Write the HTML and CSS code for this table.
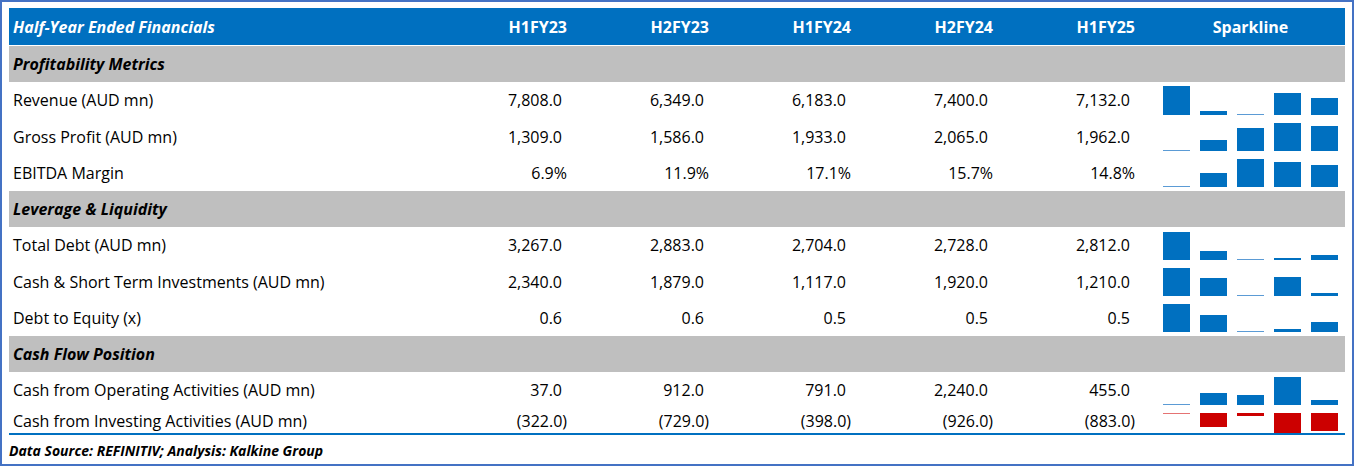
FILE: index.html
```html
<!DOCTYPE html>
<html lang="en">
<head>
<meta charset="utf-8">
<title>Half-Year Ended Financials</title>
<link rel="stylesheet" href="styles.css">
</head>
<body>
<div class="frame">
  <div class="table">
    <div class="row head">
      <div class="cell label">Half-Year Ended Financials</div>
      <div class="cell val">H1FY23</div>
      <div class="cell val">H2FY23</div>
      <div class="cell val">H1FY24</div>
      <div class="cell val">H2FY24</div>
      <div class="cell val">H1FY25</div>
      <div class="cell spark-head">Sparkline</div>
    </div>

    <div class="row section"><div class="cell label">Profitability Metrics</div></div>

    <div class="row">
      <div class="cell label">Revenue (AUD mn)</div>
      <div class="cell val"><span class="pad">7,808.0</span></div>
      <div class="cell val"><span class="pad">6,349.0</span></div>
      <div class="cell val"><span class="pad">6,183.0</span></div>
      <div class="cell val"><span class="pad">7,400.0</span></div>
      <div class="cell val"><span class="pad">7,132.0</span></div>
      <div class="cell spark up">
        <i class="bar" style="height:29px"></i><i class="bar" style="height:4px"></i><i class="bar thin"></i><i class="bar" style="height:22px"></i><i class="bar" style="height:17px"></i>
      </div>
    </div>
    <div class="row">
      <div class="cell label">Gross Profit (AUD mn)</div>
      <div class="cell val"><span class="pad">1,309.0</span></div>
      <div class="cell val"><span class="pad">1,586.0</span></div>
      <div class="cell val"><span class="pad">1,933.0</span></div>
      <div class="cell val"><span class="pad">2,065.0</span></div>
      <div class="cell val"><span class="pad">1,962.0</span></div>
      <div class="cell spark up">
        <i class="bar thin"></i><i class="bar" style="height:11px"></i><i class="bar" style="height:23px"></i><i class="bar" style="height:28px"></i><i class="bar" style="height:25px"></i>
      </div>
    </div>
    <div class="row">
      <div class="cell label">EBITDA Margin</div>
      <div class="cell val">6.9%</div>
      <div class="cell val">11.9%</div>
      <div class="cell val">17.1%</div>
      <div class="cell val">15.7%</div>
      <div class="cell val">14.8%</div>
      <div class="cell spark up">
        <i class="bar thin"></i><i class="bar" style="height:14px"></i><i class="bar" style="height:28px"></i><i class="bar" style="height:25px"></i><i class="bar" style="height:22px"></i>
      </div>
    </div>

    <div class="row section"><div class="cell label">Leverage &amp; Liquidity</div></div>

    <div class="row">
      <div class="cell label">Total Debt (AUD mn)</div>
      <div class="cell val"><span class="pad">3,267.0</span></div>
      <div class="cell val"><span class="pad">2,883.0</span></div>
      <div class="cell val"><span class="pad">2,704.0</span></div>
      <div class="cell val"><span class="pad">2,728.0</span></div>
      <div class="cell val"><span class="pad">2,812.0</span></div>
      <div class="cell spark up">
        <i class="bar" style="height:28px"></i><i class="bar" style="height:9px"></i><i class="bar thin"></i><i class="bar" style="height:2px"></i><i class="bar" style="height:5px"></i>
      </div>
    </div>
    <div class="row">
      <div class="cell label">Cash &amp; Short Term Investments (AUD mn)</div>
      <div class="cell val"><span class="pad">2,340.0</span></div>
      <div class="cell val"><span class="pad">1,879.0</span></div>
      <div class="cell val"><span class="pad">1,117.0</span></div>
      <div class="cell val"><span class="pad">1,920.0</span></div>
      <div class="cell val"><span class="pad">1,210.0</span></div>
      <div class="cell spark up">
        <i class="bar" style="height:28px"></i><i class="bar" style="height:18px"></i><i class="bar thin"></i><i class="bar" style="height:19px"></i><i class="bar" style="height:3px"></i>
      </div>
    </div>
    <div class="row">
      <div class="cell label">Debt to Equity (x)</div>
      <div class="cell val"><span class="pad">0.6</span></div>
      <div class="cell val"><span class="pad">0.6</span></div>
      <div class="cell val"><span class="pad">0.5</span></div>
      <div class="cell val"><span class="pad">0.5</span></div>
      <div class="cell val"><span class="pad">0.5</span></div>
      <div class="cell spark up">
        <i class="bar" style="height:28px"></i><i class="bar" style="height:17px"></i><i class="bar thin"></i><i class="bar" style="height:3px"></i><i class="bar" style="height:10px"></i>
      </div>
    </div>

    <div class="row section"><div class="cell label">Cash Flow Position</div></div>

    <div class="row">
      <div class="cell label">Cash from Operating Activities (AUD mn)</div>
      <div class="cell val"><span class="pad">37.0</span></div>
      <div class="cell val"><span class="pad">912.0</span></div>
      <div class="cell val"><span class="pad">791.0</span></div>
      <div class="cell val"><span class="pad">2,240.0</span></div>
      <div class="cell val"><span class="pad">455.0</span></div>
      <div class="cell spark up">
        <i class="bar thin"></i><i class="bar" style="height:12px"></i><i class="bar" style="height:10px"></i><i class="bar" style="height:28px"></i><i class="bar" style="height:5px"></i>
      </div>
    </div>
    <div class="row last">
      <div class="cell label">Cash from Investing Activities (AUD mn)</div>
      <div class="cell val">(322.0)</div>
      <div class="cell val">(729.0)</div>
      <div class="cell val">(398.0)</div>
      <div class="cell val">(926.0)</div>
      <div class="cell val">(883.0)</div>
      <div class="cell spark down">
        <i class="bar neg thin"></i><i class="bar neg" style="height:14px"></i><i class="bar neg" style="height:3px"></i><i class="bar neg" style="height:20px"></i><i class="bar neg" style="height:18px"></i>
      </div>
    </div>
  </div>
  <div class="source">Data Source: REFINITIV; Analysis: Kalkine Group</div>
</div>
</body>
</html>
```

FILE: styles.css
```css
* { box-sizing: border-box; }

html, body {
  margin: 0;
  padding: 0;
  background: #ffffff;
}

body {
  font-family: "Open Sans", "Noto Sans", sans-serif;
  font-size: 16px;
  color: #000000;
}

.frame {
  width: 1354px;
  height: 466px;
  border: 2px solid #4472c4;
  padding: 6px 7px 0 7px;
  display: flex;
  flex-direction: column;
}

.table {
  display: flex;
  flex-direction: column;
  width: 1336px;
}

.row {
  display: grid;
  grid-template-columns: 420px repeat(5, 142px) 206px;
  height: 36.25px;
  align-items: center;
}

.cell {
  padding: 0 4px;
  white-space: nowrap;
}

.label {
  padding-left: 4px;
}

.val {
  text-align: right;
}

.pad {
  padding-right: 5px;
}

.head {
  height: 38px;
  background: #0070c0;
  border-bottom: 1px solid #ffffff;
  color: #ffffff;
  font-weight: 700;
}

.head .label {
  font-style: italic;
}

.spark-head {
  text-align: center;
  padding: 0 7px 0 24px;
}

.section {
  background: #bfbfbf;
  font-weight: 700;
  font-style: italic;
}

.section .label {
  grid-column: 1 / -1;
}

.row.last {
  height: 26.5px;
  border-bottom: 2px solid #0070c0;
}

.spark {
  align-self: stretch;
  display: flex;
  gap: 10px;
  padding: 3px 7px 4px 24px;
}

.spark.up {
  align-items: flex-end;
}

.spark.down {
  align-items: flex-start;
  padding-top: 4px;
  padding-bottom: 0;
}

.bar {
  display: block;
  width: 27px;
  background: #0070c0;
}

.bar.thin {
  height: 1px;
  background: #5b9bd5;
}

.bar.neg {
  background: #cc0000;
}

.bar.neg.thin {
  height: 1px;
  background: #e57373;
}

.source {
  height: 30px;
  display: flex;
  align-items: center;
  font-size: 14px;
  font-weight: 700;
  font-style: italic;
  padding-top: 1px;
}
```
